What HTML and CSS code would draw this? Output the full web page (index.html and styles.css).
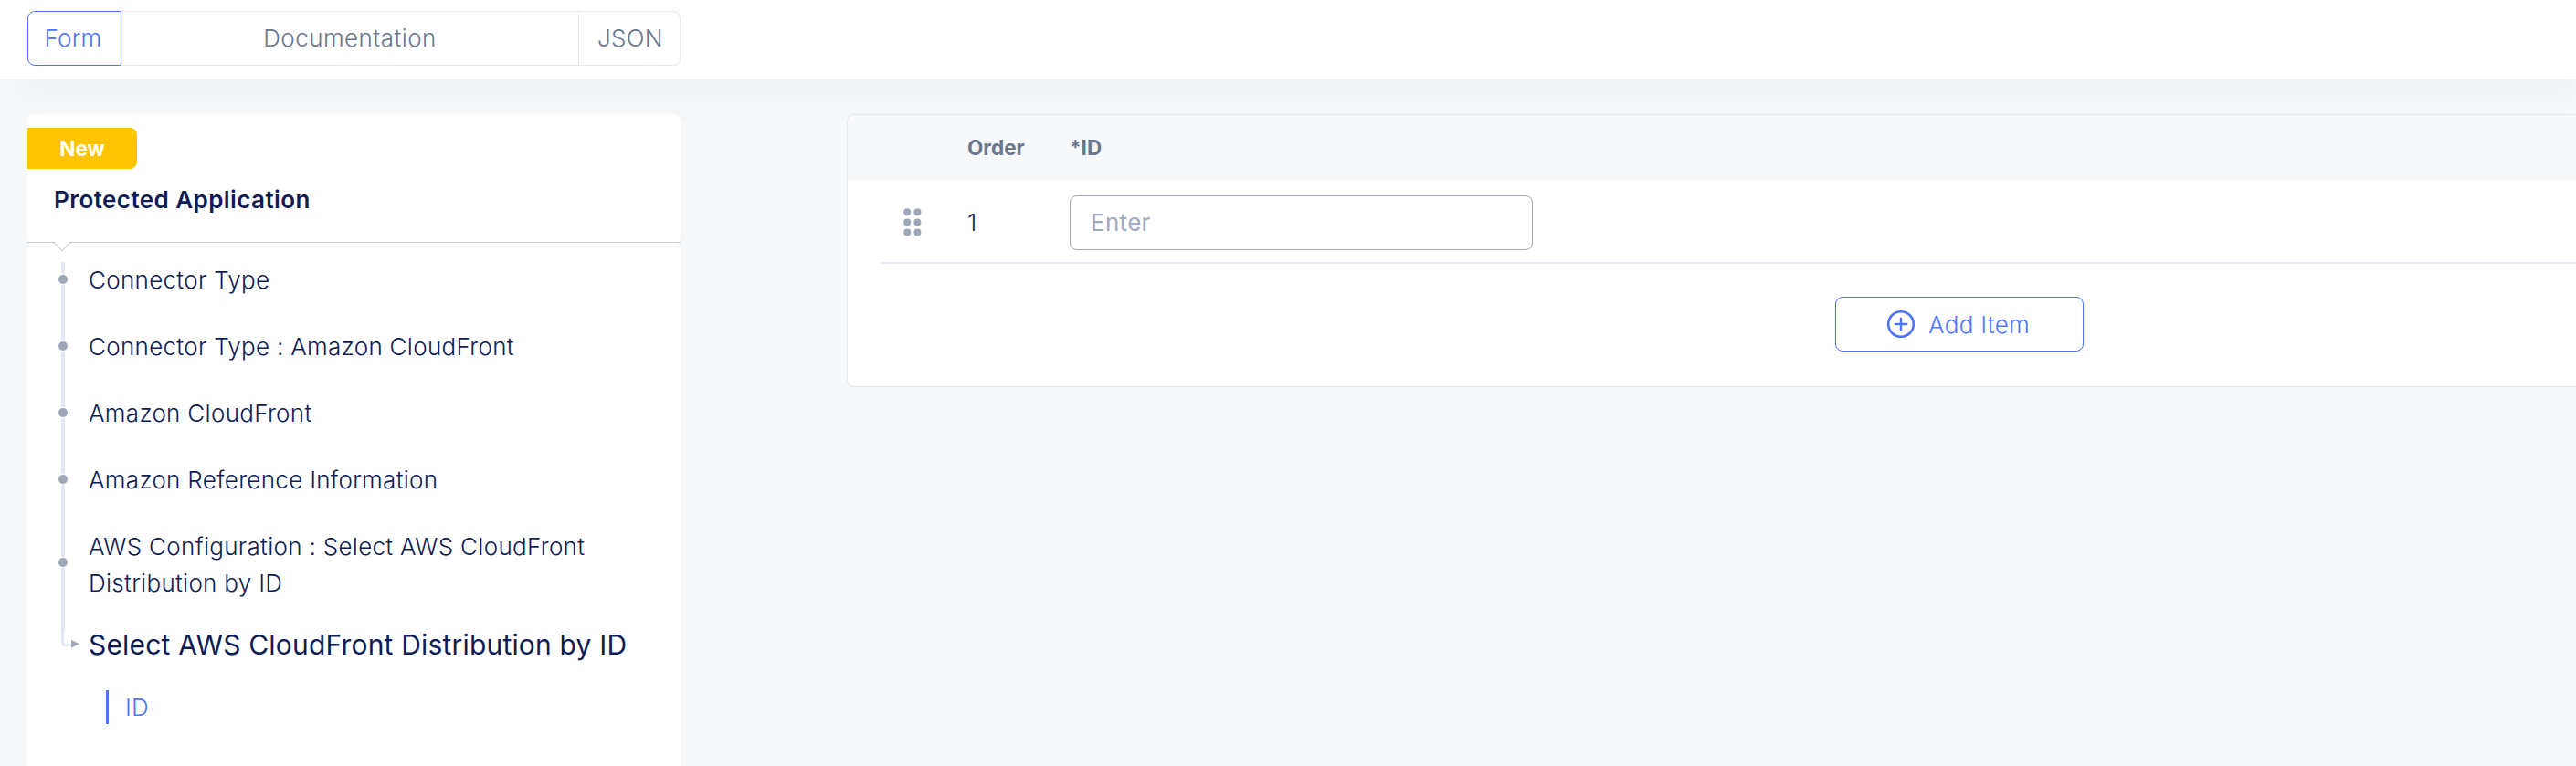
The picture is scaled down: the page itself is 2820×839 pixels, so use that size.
FILE: index.html
```
<!DOCTYPE html>
<html lang="en">
<head>
<meta charset="utf-8">
<title>Protected Application</title>
<link rel="stylesheet" href="styles.css">
</head>
<body>
<header class="topbar">
  <div class="tabs">
    <button class="tab tab-form active">Form</button>
    <button class="tab tab-docs">Documentation</button>
    <button class="tab tab-json">JSON</button>
  </div>
</header>
<main class="layout">
  <aside class="sidebar">
    <section class="side-head">
      <span class="badge">New</span>
      <h2 class="side-title">Protected Application</h2>
      <svg class="notch" width="18" height="12" viewBox="0 0 18 12"><path d="M0.5 0H17.5L9 9.5Z" fill="#fff"/><path d="M0.5 1L9 9.5L17.5 1" fill="none" stroke="#d5d6e6" stroke-width="1.2"/></svg>
    </section>
    <nav class="steps">
      <a class="step">Connector Type</a>
      <a class="step">Connector Type : Amazon CloudFront</a>
      <a class="step">Amazon CloudFront</a>
      <a class="step">Amazon Reference Information</a>
      <a class="step step-tall">AWS Configuration : Select AWS CloudFront Distribution by ID</a>
      <a class="step-current">
        <svg class="elbow" width="21" height="26" viewBox="0 0 21 26"><path d="M0 0H4V7H3V17.500Q3 20 5.500 20H11V23H4.500Q0 23 0 18.500Z" fill="#e4e8f5"/><path d="M11 16L20 20.200L11 24.500Z" fill="#9ea7b8"/></svg>
        Select AWS CloudFront Distribution by ID
      </a>
      <a class="substep">ID</a>
    </nav>
  </aside>
  <section class="card">
    <div class="row head">
      <span></span><span>Order</span><span>*ID</span>
    </div>
    <div class="row item">
      <svg class="grip" width="20" height="31" viewBox="0 0 20 31" fill="#9ea7b8"><circle cx="4.200" cy="4.200" r="4"/><circle cx="15.400" cy="4.200" r="4"/><circle cx="4.200" cy="15.400" r="4"/><circle cx="15.400" cy="15.400" r="4"/><circle cx="4.200" cy="26.600" r="4"/><circle cx="15.400" cy="26.600" r="4"/></svg>
      <span>1</span>
      <input class="field" type="text" placeholder="Enter">
    </div>
    <div class="actions">
      <button class="add">
        <svg width="32" height="32" viewBox="0 0 32 32" fill="none" stroke="#4e74ff" stroke-linecap="round"><circle cx="16" cy="16" r="13.800" stroke-width="2.600"/><path d="M9.800 16H22.200M16 9.800V22.200" stroke-width="2.400"/></svg>
        Add Item
      </button>
    </div>
  </section>
</main>
</body>
</html>
```
FILE: styles.css
```
* { box-sizing: border-box; }

body {
  margin: 0;
  height: 839px;
  overflow: hidden;
  display: flex;
  flex-direction: column;
  background: #f7f8fa;
  font-family: Inter, sans-serif;
  font-size: 26px;
  font-weight: 300;
  letter-spacing: 0.3px;
  color: #0e1c56;
}

button, input {
  font: inherit;
  letter-spacing: inherit;
  background: #fff;
  margin: 0;
}

.topbar {
  flex: none;
  height: 87px;
  padding: 12px 30px;
  background: #fff;
  box-shadow: 12px 22px 40px rgba(0, 0, 0, 0.03);
}

.tabs {
  display: flex;
  width: 715px;
  height: 60px;
}

.tab {
  border: 1px solid #e4e7f5;
  border-left-width: 0;
  padding: 0 0 1px;
  color: #6b778c;
}

.tab-form {
  width: 103px;
  border: 1px solid #4e74ff;
  border-radius: 8px 0 0 8px;
  color: #4e74ff;
  padding-right: 3px;
}

.tab-docs { flex: 1; letter-spacing: 0.45px; }

.tab-json { width: 111px; padding-left: 2px; border-radius: 0 8px 8px 0; }

.layout {
  flex: 1;
  display: flex;
  align-items: flex-start;
  gap: 182px;
  padding: 38px 0 0 30px;
}

.sidebar {
  flex: none;
  width: 715px;
}

.side-head {
  position: relative;
  height: 141px;
  padding-top: 15px;
  background: #fff;
  border-radius: 8px;
}

.side-head::after {
  content: "";
  position: absolute;
  left: 0;
  right: 0;
  bottom: 0;
  height: 1px;
  background: #c9cedb;
}

.badge {
  display: flex;
  align-items: center;
  justify-content: center;
  width: 120px;
  height: 45px;
  padding-bottom: 1px;
  border-radius: 0 8px 8px 0;
  background: #ffc400;
  color: #fff;
  font-size: 22.5px;
  font-weight: 700;
  letter-spacing: 0;
}

.side-title {
  margin: 14px 0 0 29px;
  font-size: 26px;
  line-height: 40px;
  font-weight: 600;
  letter-spacing: 0.43px;
}

.notch {
  position: absolute;
  z-index: 1;
  left: 29px;
  top: 140px;
}

.steps {
  display: flex;
  flex-direction: column;
  height: 600px;
  padding-top: 21px;
  background: #fff;
  border-radius: 8px;
}

.step {
  position: relative;
  padding: 0 70px 33px 67px;
  line-height: 40px;
}

.step::before {
  content: "";
  position: absolute;
  left: 37px;
  top: 0;
  bottom: 0;
  width: 4px;
  background: #e4e8f5;
}

.step::after {
  content: "";
  position: absolute;
  left: 34px;
  top: 13.500px;
  width: 10px;
  height: 10px;
  border-radius: 50%;
  background: #9ea7b8;
  box-shadow: 0 0 0 1px #fff;
}

.step-tall { padding-bottom: 26px; }
.step-tall::after { top: 32px; }

.step-current {
  position: relative;
  padding-left: 67px;
  line-height: 42px;
  font-size: 30px;
  font-weight: 400;
  letter-spacing: 0.19px;
}

.elbow {
  position: absolute;
  left: 37px;
  top: 0;
}

.substep {
  margin: 29px 0 0 86px;
  padding-left: 18px;
  border-left: 3px solid #4e74ff;
  height: 37px;
  line-height: 37px;
  color: #4e74ff;
}

.card {
  flex: 1;
  min-width: 0;
  height: 299px;
  border: 1px solid #e4e7f1;
  border-right: 0;
  border-radius: 8px 0 0 8px;
  background: #fff;
  overflow: hidden;
}

.row {
  display: grid;
  grid-template-columns: 131px 112px 507px;
  align-items: center;
}

.head {
  height: 72px;
  padding-bottom: 1px;
  background: #f7f8fa;
  color: #6b778c;
  font-size: 22.5px;
  font-weight: 700;
  letter-spacing: 0;
}

.item {
  height: 91px;
  margin-left: 37px;
  padding-top: 2px;
  grid-template-columns: 94px 112px 507px;
  border-bottom: 2px solid #e4e8f5;
}

.grip { margin-left: 24px; }

.field {
  height: 60px;
  padding: 0 22px 1px;
  margin-top: 1px;
  border: 1px solid #9ea7b8;
  border-radius: 8px;
  outline: none;
}

.field::placeholder {
  color: #a0a9bd;
  opacity: 1;
  font-weight: 400;
  letter-spacing: 0.3px;
}

.actions {
  padding: 36px 0 0 1081px;
}

.add {
  display: flex;
  align-items: center;
  justify-content: center;
  gap: 14px;
  width: 272px;
  height: 60px;
  padding: 0 3px 0 0;
  border: 1px solid #4e74ff;
  border-radius: 8px;
  color: #4e74ff;
}
```
